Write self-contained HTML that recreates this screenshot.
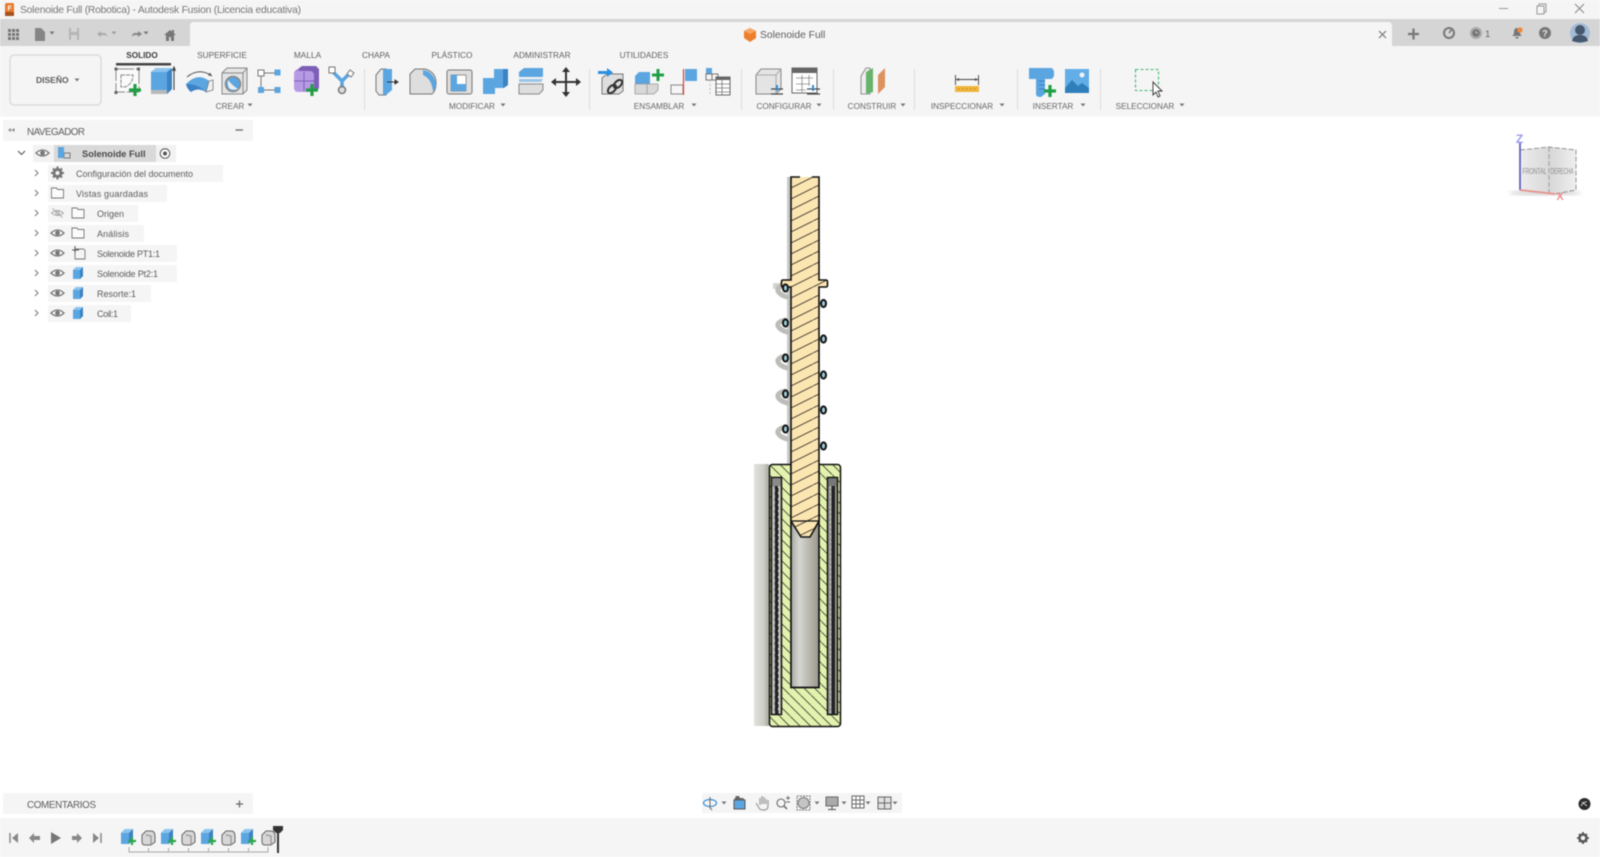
<!DOCTYPE html>
<html lang="es"><head><meta charset="utf-8"><title>Solenoide Full (Robotica) - Autodesk Fusion</title>
<style>
html,body{margin:0;padding:0;background:#fff;width:1600px;height:857px;overflow:hidden}
svg{display:block;filter:blur(.4px)}
text{font-family:"Liberation Sans",sans-serif;fill:#555}
.t{font-size:8.300px;text-anchor:middle;fill:#5f5f5f}
.l{font-size:8.200px;text-anchor:middle;fill:#666}
.n{font-size:9px;fill:#5c5c5c}
</style></head><body>
<svg width="1600" height="857" viewBox="0 0 1600 857" xmlns="http://www.w3.org/2000/svg">
<defs>
<pattern id="hr" patternUnits="userSpaceOnUse" width="22" height="11" x="791" y="177"><path d="M0 11L22 0" stroke="#3a3428" stroke-width=".9"/></pattern>
<pattern id="hg" patternUnits="userSpaceOnUse" width="10.500" height="10.500" x="769" y="464"><path d="M0 0L10.500 10.500" stroke="#3a4030" stroke-width=".8"/></pattern>
<linearGradient id="bore"><stop offset="0" stop-color="#a9a9a3"/><stop offset=".3" stop-color="#d6d6d2"/><stop offset=".65" stop-color="#b9b7ae"/><stop offset="1" stop-color="#98968d"/></linearGradient>
<linearGradient id="cyl"><stop offset="0" stop-color="#e2e2dc"/><stop offset=".6" stop-color="#d0d0c8"/><stop offset="1" stop-color="#a8a8a0"/></linearGradient>
<linearGradient id="cube" x1="0" x2="1"><stop offset="0" stop-color="#ececec"/><stop offset=".55" stop-color="#d8d8d8"/><stop offset="1" stop-color="#efefef"/></linearGradient>
<g id="eye"><path d="M-6.500 0Q0 -6 6.500 0Q0 6 -6.500 0Z" fill="#fff" stroke="#777" stroke-width="1.300"/><circle r="2.400" fill="#777"/></g>
<g id="folder"><path d="M-6 -5H-1L0 -3.500H6V5H-6Z" fill="#fbfbfb" stroke="#777" stroke-width=".9"/></g>
<g id="bc"><path d="M-5 -3L-2 -6H5V3L2 6H-5Z" fill="#5ba5e0"/><path d="M2 6V-3L5 -6V3Z" fill="#3c82c4"/><path d="M-5 -3L-2 -6H5L2 -3Z" fill="#8cc4ee"/></g>
<g id="arr"><path d="M-2.500 -1.500H2.500L0 1.500Z" fill="#777"/></g>
<g id="tl1"><path d="M-7 -4L-3 -8H5V3L1 7H-7Z" fill="#5ba5e0"/><path d="M1 7V-4L5 -8V3Z" fill="#3c82c4"/><path d="M-7 -4L-3 -8H5L1 -4Z" fill="#8cc4ee"/><path d="M0 4H8M4 0V8" stroke="#2ea84f" stroke-width="2.200"/></g>
<g id="tl2"><path d="M-6 -3L-2 -7H4Q7 -6 7 -2V4L3 7H-3Q-6 7 -6 4Z" fill="#d6d6d6" stroke="#666" stroke-width="1"/><path d="M3 7V-2L-2 -3" fill="none" stroke="#8a8a8a"/></g>
<g id="coilL"><path d="M8 -4Q0 -2 1 2Q3 6 10 8" fill="none" stroke="#bcbcb8" stroke-width="5" stroke-linecap="round"/></g>
<g id="ring"><ellipse rx="2.500" ry="3.600" fill="#9fd0da" stroke="#111" stroke-width="2"/></g>
<filter id="sh"><feGaussianBlur stdDeviation="2"/></filter>
</defs>

<!-- chrome -->
<rect width="1600" height="19" fill="#f5f5f5"/>
<rect y="19" width="1600" height="27" fill="#d5d5d5"/>
<path d="M190 46V26Q190 22 194 22H1388Q1392 22 1392 26V46Z" fill="#f5f5f5"/>
<rect y="46" width="1600" height="70.500" fill="#f5f5f5"/>

<!-- title -->
<rect x="5" y="3" width="9" height="13" rx="1.500" fill="#e87a2c"/>
<rect x="5" y="12" width="9" height="4" fill="#a85020"/>
<text x="7.500" y="10.500" style="font-size:7px;font-weight:bold;fill:#fff">F</text>
<text x="20" y="13" style="font-size:10.300px;fill:#777" textLength="281">Solenoide Full (Robotica) - Autodesk Fusion (Licencia educativa)</text>
<path d="M1499 8.500H1508" stroke="#999" stroke-width="1"/>
<path d="M1537 6h7v8h-7zM1539 6V4h7v8h-2" fill="none" stroke="#999"/>
<path d="M1575 4l9 9M1584 4l-9 9" stroke="#888" stroke-width="1"/>

<!-- tab bar left icons -->
<g fill="#777"><rect x="8" y="29" width="3" height="3"/><rect x="12" y="29" width="3" height="3"/><rect x="16" y="29" width="3" height="3"/><rect x="8" y="33" width="3" height="3"/><rect x="12" y="33" width="3" height="3"/><rect x="16" y="33" width="3" height="3"/><rect x="8" y="37" width="3" height="3"/><rect x="12" y="37" width="3" height="3"/><rect x="16" y="37" width="3" height="3"/></g>
<path d="M35 28h6l4 4v9H35Z" fill="#858585"/><use href="#arr" x="52" y="33"/>
<path d="M69 28h10v12H69Z" fill="#b5b5b5"/><rect x="71" y="28" width="6" height="4" fill="#d5d5d5"/><rect x="71" y="35" width="6" height="5" fill="#d5d5d5"/>
<path d="M97 34l4-3v2h3q3 0 3 4q-1-2-3-2h-3v2Z" fill="#aaa"/><use href="#arr" x="114" y="33" opacity=".6"/>
<path d="M142 34l-4-3v2h-3q-3 0-3 4q1-2 3-2h3v2Z" fill="#858585"/><use href="#arr" x="146" y="33"/>
<path d="M164 35l6-5 2 1.500V30h2v3.200l2 1.800h-2v6h-3v-4h-2v4h-3v-6Z" fill="#777"/>

<!-- doc tab -->
<path d="M750 28l6 3v7l-6 4-6-4v-7Z" fill="#ee7d2c"/><path d="M750 28l6 3-6 3-6-3Z" fill="#f6a766"/>
<text x="760" y="38" style="font-size:10.300px;fill:#5c5c5c">Solenoide Full</text>
<path d="M1379 31l7 7M1386 31l-7 7" stroke="#777" stroke-width="1.200"/>

<!-- right icons -->
<path d="M1408 34h11M1413.500 28.500v11" stroke="#777" stroke-width="2.200"/>
<circle cx="1449" cy="33" r="5" fill="none" stroke="#777" stroke-width="2"/><path d="M1449 33l3-4" stroke="#777" stroke-width="1.500"/>
<circle cx="1476" cy="33" r="6" fill="#aaa"/><circle cx="1476" cy="33" r="3.800" fill="#777"/><path d="M1476 31v2h2" stroke="#bbb" fill="none"/>
<text x="1485" y="37" style="font-size:9.500px;fill:#666">1</text>
<path d="M1512 36q2-1 2-4q0-4 3-4q3 0 3 4q0 3 2 4Z" fill="#777"/><rect x="1515.500" y="37" width="3" height="1.500" fill="#777"/><circle cx="1520" cy="30" r="2.700" fill="#f08a3c"/>
<circle cx="1545" cy="33" r="6" fill="#777"/><text x="1545" y="36.500" style="font-size:9px;font-weight:bold;text-anchor:middle;fill:#e8e8e8">?</text>
<circle cx="1580" cy="33" r="10" fill="#a4bcd6"/><circle cx="1580" cy="30" r="5" fill="#46586e"/><path d="M1572 41q1-6 8-6q7 0 8 6q-8 3-16 0Z" fill="#46586e"/>

<!-- design button -->
<rect x="10" y="55" width="91" height="50" rx="4" fill="#f5f5f5" stroke="#dcdcdc" stroke-width="1.500"/>
<text x="36" y="83" style="font-size:8.500px;font-weight:bold;fill:#5c5c5c">DISEÑO</text><use href="#arr" x="77" y="80"/>

<!-- tabs -->
<text class="t" x="142" y="58" style="fill:#3c3c3c;font-weight:bold;font-size:8.200px">SOLIDO</text>
<rect x="116" y="63" width="55" height="2.500" fill="#444"/>
<text class="t" x="222" y="58">SUPERFICIE</text>
<text class="t" x="307.500" y="58">MALLA</text>
<text class="t" x="376" y="58">CHAPA</text>
<text class="t" x="452" y="58">PLÁSTICO</text>
<text class="t" x="542" y="58">ADMINISTRAR</text>
<text class="t" x="644" y="58">UTILIDADES</text>

<!-- group labels -->
<text class="l" x="230" y="109">CREAR</text><use href="#arr" x="250" y="105"/>
<text class="l" x="472" y="109">MODIFICAR</text><use href="#arr" x="503" y="105"/>
<text class="l" x="659" y="109">ENSAMBLAR</text><use href="#arr" x="694" y="105"/>
<text class="l" x="784" y="109">CONFIGURAR</text><use href="#arr" x="819" y="105"/>
<text class="l" x="872" y="109">CONSTRUIR</text><use href="#arr" x="903" y="105"/>
<text class="l" x="962" y="109">INSPECCIONAR</text><use href="#arr" x="1002" y="105"/>
<text class="l" x="1053" y="109">INSERTAR</text><use href="#arr" x="1083" y="105"/>
<text class="l" x="1145" y="109">SELECCIONAR</text><use href="#arr" x="1182" y="105"/>

<!-- separators -->
<g stroke="#dcdcdc" stroke-width="1"><path d="M364.500 69V110M589.500 69V110M741.500 69V110M833.500 69V110M914.500 69V110M1017.500 69V110M1100.500 69V110"/></g>

<!-- CREAR icons -->
<rect x="116" y="69" width="23" height="23" fill="#fafafa" stroke="#888" stroke-width="1" stroke-dasharray="18 2"/>
<g fill="#666"><rect x="114.500" y="67.500" width="3" height="3"/><rect x="137" y="67.500" width="3" height="3"/><rect x="114.500" y="91" width="3" height="3"/></g>
<path d="M121 75H133Q133 84 125 87H121Z" fill="none" stroke="#888" stroke-dasharray="4 1"/>
<path d="M129 90h12M135 84v12" stroke="#1f9e45" stroke-width="3.200"/>
<path d="M151 72l5-4h16v21l-5 5h-16Z" fill="#5ba5e0"/><path d="M167 94V72l5-4v21Z" fill="#3c82c4"/><path d="M151 72l5-4h16l-5 4Z" fill="#8cc4ee"/><path d="M151 90h16v4h-16Z" fill="#b8b8b8"/>
<path d="M174 90V68M172.500 71l1.500-4 1.500 4" stroke="#333" fill="none"/>
<path d="M187 77q12-10 25-1" fill="none" stroke="#555" stroke-width="1"/><path d="M212 76l-4-.500 2-3Z" fill="#555"/>
<path d="M186 84Q198 72 209 81L206 92Q198 87 191 92Z" fill="#5ba5e0"/><path d="M186 84Q187 89 191 92Q198 87 206 92Q198 84 186 84Z" fill="#3c82c4"/><path d="M209 81L213 80V90L206 92Z" fill="#f0f0f0" stroke="#777" stroke-width=".8"/>
<path d="M222 73l5-5h20v22l-4 4h-21Z" fill="#e4e4e4" stroke="#888"/><path d="M243 94V73l4-5" fill="none" stroke="#888"/><path d="M222 73h21" stroke="#888"/>
<circle cx="233" cy="84" r="7.500" fill="#5ba5e0" stroke="#888" stroke-width="1.500"/><path d="M228 80q5 6 10 9q-6 2-9-1q-2-4-1-8Z" fill="#eee"/>
<rect x="258" y="70" width="6" height="6" fill="#fff" stroke="#777"/><rect x="274.500" y="69.500" width="6" height="6" fill="#5ba5e0"/><rect x="258" y="87" width="6" height="6" fill="#5ba5e0"/><rect x="274.500" y="87" width="6" height="6" fill="#5ba5e0"/><path d="M264 73h11M261 76v11M264 90h11" stroke="#777"/>
<rect x="294" y="69" width="22" height="23" rx="5" fill="#a484d8"/><path d="M298 69l4-3h14l3 3v19l-3 4Z" fill="#7d5fb8"/><rect x="294" y="71" width="20" height="21" rx="4" fill="#b79ae4"/><path d="M304 72v19M294 81h20" stroke="#8060bb"/>
<path d="M306 90h12M312 84v12" stroke="#1f9e45" stroke-width="3.200"/>
<path d="M333 72l9 9 9-9M342 81v8" stroke="#5ba5e0" stroke-width="3.500" fill="none"/><rect x="329" y="67" width="6" height="6" fill="#fff" stroke="#777"/><path d="M350 70l4 3-3 4-4-3Z" fill="#fff" stroke="#777"/><circle cx="342" cy="90" r="3.500" fill="#dcdcdc" stroke="#777" stroke-width="1.500"/>

<!-- MODIFICAR icons -->
<path d="M376 75l5-6h5v26h-7l-3-4Z" fill="#e8e8e8" stroke="#777"/><path d="M383 69h9v21l-6 5h-3Z" fill="#5ba5e0"/><path d="M387 82h11M398 82l-3-2v4Z" stroke="#333" fill="#333"/>
<path d="M410 74l5-5h10q11 3 11 14q0 8-4 11h-22Z" fill="#dedede" stroke="#777"/><path d="M423 70q12 2 13 16l-3 6q-1-13-10-17Z" fill="#5ba5e0"/>
<rect x="447" y="70" width="25" height="24" rx="2" fill="#dedede" stroke="#777"/><path d="M451 75h15v16H451Z" fill="#fff" stroke="#777" stroke-width=".7"/><path d="M451 91V75h6v9h9v7Z" fill="#5ba5e0"/>
<path d="M483 78h11v-9h14v16l-4 3h-9v6h-12Z" fill="#5ba5e0"/><path d="M503 69h5v16l-5 3Z" fill="#3c82c4"/>
<path d="M519 72l5-4h19v9h-24Z" fill="#5ba5e0"/><path d="M519 79h24l-2 3H519Z" fill="#5ba5e0" opacity=".6"/><path d="M519 84h24v6l-4 4h-20Z" fill="#dedede" stroke="#888"/>
<path d="M566 69v26M553 82h26" stroke="#333" stroke-width="2"/><path d="M566 67l-4 5h8ZM566 97l-4-5h8ZM551 82l5-4v8ZM581 82l-5-4v8Z" fill="#333"/>

<!-- ENSAMBLAR icons -->
<path d="M602 78l5-4h16v17l-4 3h-17Z" fill="#dedede" stroke="#777"/>
<path d="M598 71h9v-3l6 4.500-6 4.500v-3h-9Z" fill="#2d8fe0"/>
<ellipse cx="612" cy="89" rx="5" ry="3" transform="rotate(-45 612 89)" fill="none" stroke="#333" stroke-width="2"/><ellipse cx="618" cy="84" rx="5" ry="3" transform="rotate(-45 618 84)" fill="none" stroke="#333" stroke-width="2"/>
<path d="M635 76l4-4h11v12h-15Z" fill="#5ba5e0"/><path d="M635 84h12v10H635ZM647 84l11 0v6l-4 4h-7Z" fill="#d8d8d8" stroke="#999" stroke-width=".8"/>
<path d="M652 75h12M658 69v12" stroke="#1f9e45" stroke-width="3"/>
<rect x="671" y="85" width="12" height="9" fill="#f5f5f5" stroke="#888"/><rect x="685" y="69" width="12" height="12" fill="#5ba5e0"/><path d="M683.500 69V95" stroke="#d8443c" stroke-width="1.200"/>
<rect x="706" y="68" width="6" height="6" fill="#5ba5e0"/><rect x="706" y="74" width="6" height="6" fill="none" stroke="#777"/><rect x="712" y="74" width="6" height="6" fill="none" stroke="#777"/>
<path d="M710 80v14" stroke="#bbb" stroke-dasharray="2 2"/>
<rect x="716" y="77" width="14" height="18" fill="#fff" stroke="#666"/><rect x="716" y="77" width="14" height="3" fill="#666"/><path d="M716 84h14M716 88h14M716 92h14M722 80v15" stroke="#777" stroke-width=".8"/>

<!-- CONFIGURAR -->
<path d="M756 75l5-6h20v20l-5 5h-20Z" fill="#e4e4e4" stroke="#888"/><path d="M776 94V75H756M776 75l5-6" fill="none" stroke="#aaa"/>
<path d="M771 89h12M771 94h12" stroke="#444" stroke-width="1.300"/><path d="M777 85v6" stroke="#2d8fe0" stroke-width="2"/>
<rect x="792" y="68" width="25" height="25" fill="#fff" stroke="#666"/><rect x="792" y="68" width="25" height="5" fill="#666"/><path d="M796 78h17M796 84h14M796 90h10M802 75v17M809 75v11" stroke="#888" stroke-width=".8"/>
<path d="M807 89h13M807 94h13" stroke="#444" stroke-width="1.300"/><path d="M813 85v6" stroke="#2d8fe0" stroke-width="2"/>

<!-- CONSTRUIR -->
<path d="M861 76l5-8h4v26h-9Z" fill="#ededed" stroke="#777" stroke-width=".8"/><path d="M866 72l7-4v24l-7 2Z" fill="#66b36a"/><path d="M878 75l7-7v19l-7 7Z" fill="#dd9260"/>

<!-- INSPECCIONAR -->
<rect x="955" y="86" width="24" height="6" fill="#f0b53a"/><path d="M958 89h19" stroke="#b8862a" stroke-dasharray="1.500 2.500"/>
<path d="M955.500 75v10M978.500 75v10M956 79.500h22" stroke="#444" stroke-width=".9"/><path d="M956 79.500l3-1.500v3ZM978 79.500l-3-1.500v3Z" fill="#444"/>

<!-- INSERTAR -->
<path d="M1029 68h23l2 3v5l-2 3h-7v15l-4 3q-5 0-5-3V79h-7Z" fill="#5ba5e0"/><path d="M1039 81h6M1039 85h6M1039 89h6" stroke="#3c82c4"/>
<path d="M1044 91h12M1050 85v12" stroke="#1f9e45" stroke-width="3.200"/>
<rect x="1065" y="69" width="24" height="24" fill="#63aee6"/><circle cx="1082" cy="75" r="2.500" fill="#f0f4f6"/><path d="M1065 88l7-8 6 6 4-3 7 5v5h-24Z" fill="#2f7fbc"/>

<!-- SELECCIONAR -->
<rect x="1135.500" y="69.500" width="23" height="21" fill="none" stroke="#48b574" stroke-width="1.100" stroke-dasharray="3 2"/>
<path d="M1153 82v13l3-3 2 5 2-1-2-5h4Z" fill="#fff" stroke="#333" stroke-width=".9"/>

<!-- navigator -->
<rect x="3" y="120" width="250" height="21" fill="#f5f5f5"/>
<path d="M11 128l-3 2 3 2ZM14.500 128l-3 2 3 2Z" fill="#888"/>
<text x="27" y="135" style="font-size:9.800px;fill:#5c5c5c" textLength="58">NAVEGADOR</text>
<path d="M235.500 130H243" stroke="#666" stroke-width="1.300"/>

<rect x="33" y="145" width="143" height="17" fill="#f2f2f2"/><rect x="54" y="145" width="102" height="17" fill="#d9d9d9"/>
<path d="M18 151l3.500 3.500 3.500-3.500" fill="none" stroke="#555" stroke-width="1.100"/>
<use href="#eye" x="42.500" y="153"/>
<rect x="58" y="147" width="6" height="6" fill="#5ba5e0"/><rect x="64" y="153" width="6" height="5" fill="none" stroke="#777"/><rect x="58" y="153" width="6" height="5" fill="#5ba5e0"/>
<text x="82" y="157" style="font-size:9.300px;font-weight:bold;fill:#4a4a4a">Solenoide Full</text>
<circle cx="165" cy="153.500" r="4.800" fill="#fff" stroke="#555"/><circle cx="165" cy="153.500" r="2" fill="#555"/>

<g fill="#f5f5f5">
<rect x="48" y="165" width="175" height="17"/><rect x="48" y="185" width="119" height="17"/><rect x="48" y="205" width="90" height="17"/><rect x="48" y="225" width="96" height="17"/><rect x="48" y="245" width="129" height="17"/><rect x="48" y="265" width="129" height="17"/><rect x="48" y="285" width="103" height="17"/><rect x="48" y="305" width="83" height="17"/>
</g>
<path d="M35 170l3 3-3 3M35 190l3 3-3 3M35 210l3 3-3 3M35 230l3 3-3 3M35 250l3 3-3 3M35 270l3 3-3 3M35 290l3 3-3 3M35 310l3 3-3 3" fill="none" stroke="#777"/>

<circle cx="57.500" cy="173" r="3.500" fill="none" stroke="#777" stroke-width="3"/><path d="M57.500 166.500v3M57.500 176.500v3M51 173h3M61 173h3M53 168.500l2 2M60 175.500l2 2M53 177.500l2-2M60 170.500l2-2" stroke="#777" stroke-width="2"/>
<use href="#folder" x="57.500" y="193"/><use href="#folder" x="78" y="213"/><use href="#folder" x="78" y="233"/>
<g transform="translate(57.500 213)"><path d="M-6 0Q0 -5 6 0Q0 5 -6 0Z" fill="none" stroke="#aaa"/><circle r="1.800" fill="none" stroke="#aaa"/><path d="M-5 -4.500L5 4.500" stroke="#aaa"/></g>
<use href="#eye" x="57.500" y="233"/><use href="#eye" x="57.500" y="253"/><use href="#eye" x="57.500" y="273"/><use href="#eye" x="57.500" y="293"/><use href="#eye" x="57.500" y="313"/>
<path d="M75 249h8l2 1v9H75Z" fill="#f5f5f5" stroke="#777" stroke-width=".9"/><path d="M72 250h7M75 246v7" stroke="#555"/>
<use href="#bc" x="78" y="273"/><use href="#bc" x="78" y="293"/><use href="#bc" x="78" y="313"/>

<text class="n" x="76" y="177" textLength="117">Configuración del documento</text>
<text class="n" x="76" y="197" textLength="72">Vistas guardadas</text>
<text class="n" x="97" y="217" textLength="27">Origen</text>
<text class="n" x="97" y="237" textLength="32">Análisis</text>
<text class="n" x="97" y="257" textLength="63">Solenoide PT1:1</text>
<text class="n" x="97" y="277" textLength="61">Solenoide Pt2:1</text>
<text class="n" x="97" y="297" textLength="39">Resorte:1</text>
<text class="n" x="97" y="317" textLength="21">Coil:1</text>

<!-- model -->
<rect x="787" y="177" width="4.500" height="287" fill="#c9c9c5"/>
<rect x="754" y="464" width="15" height="262" rx="1" fill="url(#cyl)"/>
<rect x="773" y="283" width="18" height="6" rx="1" fill="#d4d4d0"/>
<use href="#coilL" x="777" y="289"/><use href="#coilL" x="777" y="324"/><use href="#coilL" x="777" y="360"/><use href="#coilL" x="777" y="395"/><use href="#coilL" x="777" y="431"/>

<rect x="769.500" y="464.500" width="71" height="262" rx="3" fill="#e3f2ae"/>
<rect x="769.500" y="464.500" width="71" height="262" rx="3" fill="url(#hg)" stroke="#111" stroke-width="1.500"/>

<!-- coil slots -->
<g>
<rect x="771.500" y="477.500" width="10" height="237" fill="#c4c4c0" stroke="#111" stroke-width="1.500"/>
<rect x="772.500" y="478.500" width="8" height="8" fill="#8a8a8a"/>
<rect x="775" y="486" width="3.500" height="228" fill="#222"/>
<path d="M774.500 486V713" stroke="#888" stroke-width="1" stroke-dasharray="3 3"/>
<path d="M778.500 486V713" stroke="#e8e8e8" stroke-width="1" stroke-dasharray="2 4"/>
<rect x="827.500" y="477.500" width="10" height="237" fill="#9a9a98" stroke="#111" stroke-width="1.500"/>
<rect x="828.500" y="478.500" width="8" height="8" fill="#777"/>
<rect x="831.500" y="486" width="3.500" height="228" fill="#222"/>
<path d="M830.500 486V713" stroke="#ccc" stroke-width="1" stroke-dasharray="2 3"/>
</g>

<!-- bore -->
<rect x="791" y="464" width="28" height="224" fill="url(#bore)"/>
<path d="M791 464V687.500H819V464" fill="none" stroke="#111" stroke-width="1.700"/>

<!-- rod -->
<path d="M791 177V280H783Q781.500 280 781.500 282V285Q781.500 287 783 287H791V521L801 537H810L819 521V287H826Q827.500 287 827.500 285V282Q827.500 280 826 280H819V177Z" fill="#fbe6b2"/>
<path d="M791 177V280H783Q781.500 280 781.500 282V285Q781.500 287 783 287H791V521L801 537H810L819 521V287H826Q827.500 287 827.500 285V282Q827.500 280 826 280H819V177Z" fill="url(#hr)"/>
<path d="M800 177H791V280H783Q781.500 280 781.500 282V285Q781.500 287 783 287H791V521L801 537H810L819 521V287H826Q827.500 287 827.500 285V282Q827.500 280 826 280H819V177H812" fill="none" stroke="#111" stroke-width="1.600"/>
<path d="M791 521H819" stroke="#111" stroke-width="1.300"/>

<use href="#ring" x="785.500" y="288"/><use href="#ring" x="785.500" y="323"/><use href="#ring" x="785.500" y="358"/><use href="#ring" x="785.500" y="394"/><use href="#ring" x="785.500" y="429"/>
<use href="#ring" x="823.500" y="303.500"/><use href="#ring" x="823.500" y="339"/><use href="#ring" x="823.500" y="375"/><use href="#ring" x="823.500" y="410"/><use href="#ring" x="823.500" y="446"/>

<!-- viewcube -->
<ellipse cx="1545" cy="193" rx="36" ry="2.500" fill="#cfcfcf" filter="url(#sh)"/>
<path d="M1520 150L1549 147L1576 150V190L1555 194L1520 190Z" fill="url(#cube)"/>
<path d="M1520 150L1549 147L1576 150V190L1555 194" fill="none" stroke="#8a8a8a" stroke-width=".9" stroke-dasharray="5 2"/>
<path d="M1549 147V194" stroke="#999" stroke-width=".9" stroke-dasharray="5 2"/>
<text x="1534.500" y="174" style="font-size:8.500px;text-anchor:middle;fill:#8a8a8a" textLength="24" lengthAdjust="spacingAndGlyphs">FRONTAL</text>
<text x="1562" y="174" style="font-size:8.500px;text-anchor:middle;fill:#8a8a8a" textLength="23" lengthAdjust="spacingAndGlyphs">DERECHA</text>
<path d="M1520 143V190" stroke="#5a5ac0" stroke-width="1.700"/>
<path d="M1520 190L1555 194" stroke="#e8908a" stroke-width="1.700"/>
<text x="1519.500" y="143" style="font-size:12px;font-weight:bold;text-anchor:middle;fill:#9a9af0">Z</text>
<text x="1560" y="200" style="font-size:11px;font-weight:bold;text-anchor:middle;fill:#ee8a8a">X</text>

<!-- comments -->
<rect x="3" y="793" width="250" height="21" fill="#f5f5f5"/>
<text x="27" y="808" style="font-size:9.800px;fill:#5c5c5c" textLength="69">COMENTARIOS</text>
<path d="M236 804h7M239.500 800.500v7" stroke="#666" stroke-width="1.200"/>

<!-- nav toolbar -->
<rect x="702" y="793" width="200" height="20" fill="#f5f5f5"/>
<ellipse cx="710" cy="803" rx="6.500" ry="3.500" fill="none" stroke="#3f8fd0" stroke-width="1.200"/><path d="M710 797v11" stroke="#666"/><path d="M710 808l2 2" stroke="#666"/>
<use href="#arr" x="724" y="803"/>
<rect x="734" y="800" width="11" height="9" fill="#5ba5e0" stroke="#555"/><path d="M734 800l2-4h3l1 2h3l2 2Z" fill="#666"/>
<path d="M756 803l3 5q1 2 4 2h2q3-1 3-4v-6M760 805v-7M762 804v-8M764 804v-7M766 804v-5" fill="none" stroke="#999" stroke-width="1.200"/>
<circle cx="781" cy="803" r="4" fill="none" stroke="#666" stroke-width="1.100"/><path d="M784 806l3 3" stroke="#666" stroke-width="1.500"/><path d="M786 798h4M788 796v4M786 802h4" stroke="#666" stroke-width=".9"/>
<rect x="797" y="796" width="13" height="14" fill="none" stroke="#777" stroke-dasharray="2 1"/><circle cx="803.500" cy="803" r="5.500" fill="#c4c4c4" stroke="#777"/>
<use href="#arr" x="817" y="803"/>
<rect x="826" y="797" width="12" height="9" fill="#aaa" stroke="#666"/><path d="M832 806v3M828 809.500h8" stroke="#666" stroke-width="1.200"/>
<use href="#arr" x="844" y="803"/>
<rect x="852" y="796" width="12" height="12" fill="#fff" stroke="#666"/><path d="M856 796v12M860 796v12M852 800h12M852 804h12" stroke="#666" stroke-width=".9"/>
<use href="#arr" x="868" y="803"/>
<rect x="878" y="797" width="13" height="12" fill="#e0e0e0" stroke="#666"/><path d="M884.500 797v12M878 803h13" stroke="#666"/>
<use href="#arr" x="895" y="803"/>

<circle cx="1584.500" cy="804" r="6" fill="#2b2b2b"/><path d="M1581 806q3-5 6-4M1582 802l5 4" stroke="#ddd" fill="none" stroke-width=".9"/>

<!-- timeline -->
<rect y="818" width="1600" height="39" fill="#f5f5f5"/>
<path d="M10 833v10" stroke="#888" stroke-width="1.500"/><path d="M12 838l6-5v10Z" fill="#888"/>
<path d="M29 838l5-5v10ZM34 836h6v4h-6Z" fill="#888"/>
<path d="M51 832l10 6-10 6Z" fill="#777"/>
<path d="M82 838l-5-5v10ZM77 836h-5v4h5Z" fill="#888"/>
<path d="M101 833v10" stroke="#888" stroke-width="1.500"/><path d="M99 838l-6-5v10Z" fill="#888"/>
<use href="#tl1" x="128" y="837"/><use href="#tl2" x="148" y="838"/><use href="#tl1" x="168" y="837"/><use href="#tl2" x="188" y="838"/><use href="#tl1" x="208" y="837"/><use href="#tl2" x="228" y="838"/><use href="#tl1" x="248" y="837"/><use href="#tl2" x="268" y="838"/>
<path d="M129 847v5H268v-5M148.500 848v4M168.500 848v4M188.500 848v4M208.500 848v4M228.500 848v4M248.500 848v4" fill="none" stroke="#aaa"/>
<path d="M273 826h10v4l-3 3h-1v20h-2V833h-1l-3-3Z" fill="#333"/>
<circle cx="1583" cy="838" r="3.500" fill="none" stroke="#555" stroke-width="2.500"/><path d="M1583 832v2M1583 842v2M1577 838h2M1587 838h2M1579 834l1.500 1.500M1585.500 840.500l1.500 1.500M1579 842l1.500-1.500M1585.500 835.500l1.500-1.500" stroke="#555" stroke-width="1.800"/>
</svg>
</body></html>
